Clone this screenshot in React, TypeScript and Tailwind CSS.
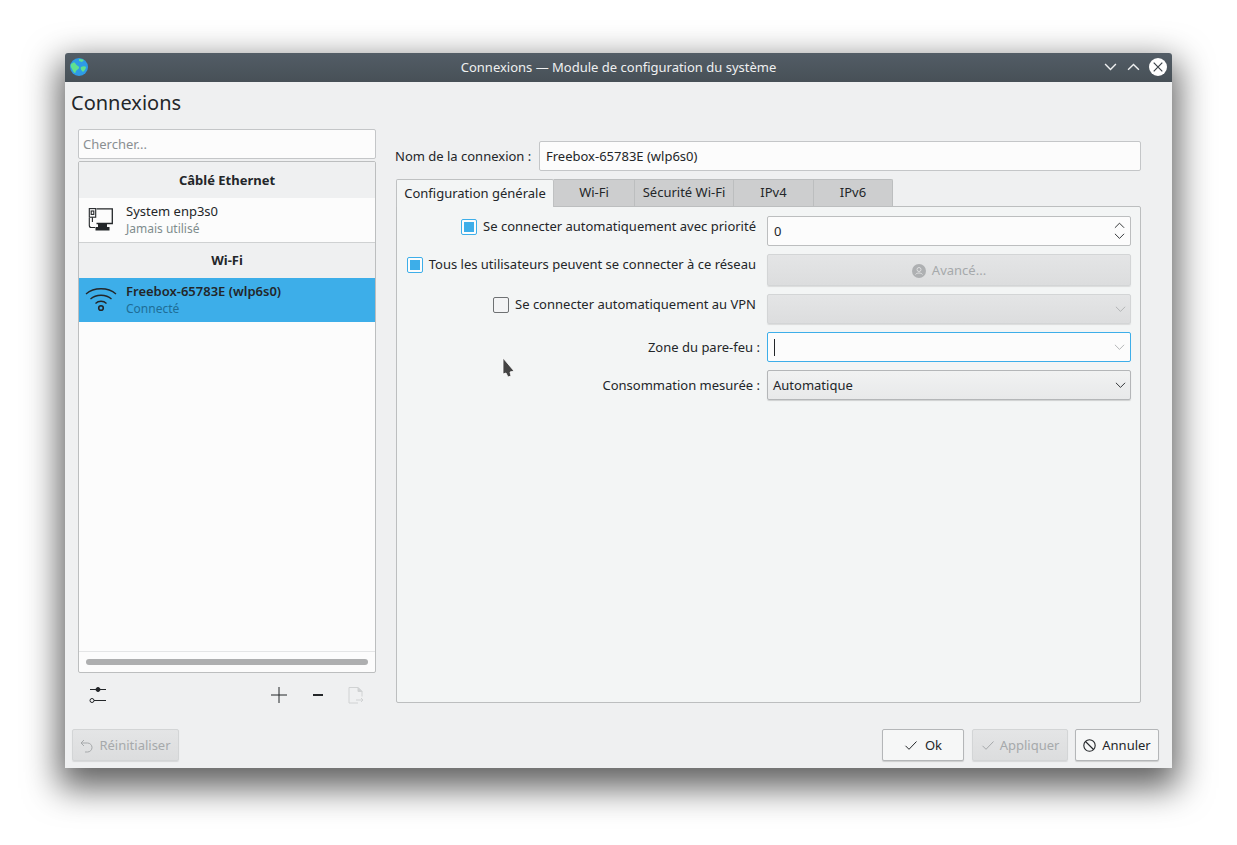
import React from "react";

const ink = "#232629";

function Chevron({ up = false, color = ink, size = 12, weight = 1 }: { up?: boolean; color?: string; size?: number; weight?: number }) {
  return (
    <svg width={size} height={size * 0.6} viewBox="0 0 12 7" fill="none" stroke={color} strokeWidth={weight}>
      <path d={up ? "M1 6.2 6 1.2l5 5" : "M1 .8l5 5 5-5"} />
    </svg>
  );
}

function Globe() {
  return (
    <svg width="18" height="18" viewBox="0 0 18 18">
      <circle cx="9" cy="9" r="9" fill="#2e9be6" />
      <path d="M1 6c2-1 3-2 4-1s1 2 3 3 1 3-1 4-1 3-2 3-2-2-3-4-2-3-1-5z" fill="#5fe08f" />
      <path d="M9 1c2 0 3 0 5 1l-2 2-3-1zM11 9c2-1 4-1 5 0 0 2-2 4-3 5-1-1-3-3-2-5z" fill="#5fe08f" />
    </svg>
  );
}

function EthernetIcon() {
  return (
    <svg width="25" height="24" viewBox="0 0 25 24" fill="none" stroke={ink} strokeWidth="1.1">
      <path d="M8.500 .8H24.300V15.500H8.500" strokeWidth="1.300" />
      <rect x="1.300" y=".6" width="6.400" height="8.600" />
      <rect x="3.200" y="3" width="2.600" height="3.400" />
      <path d="M4.400 9.200V14M1.300 10v7.500q0 2 2 2H7" />
      <rect x="10" y="16" width="9" height="3" fill={ink} stroke="none" />
      <rect x="7.500" y="19" width="14" height="3.500" fill={ink} stroke="none" />
    </svg>
  );
}

function WifiIcon() {
  return (
    <svg width="32" height="26" viewBox="0 0 32 26" fill="none" stroke={ink} strokeWidth="1.300">
      <path d="M1 7c8-7 22-7 30 0" />
      <path d="M5.500 12c5.500-5 15.500-5 21 0" />
      <path d="M10.500 16.500c3-3 8-3 11 0" />
      <circle cx="16" cy="21" r="2.300" strokeWidth="1.600" />
    </svg>
  );
}

function Check({ color = ink }: { color?: string }) {
  return (
    <svg width="14" height="11" viewBox="0 0 14 11" fill="none" stroke={color} strokeWidth="1">
      <path d="M1.500 5.800 5 9.300 12.500 1.500" />
    </svg>
  );
}

function CheckBox({ on = false }: { on?: boolean }) {
  return on ? (
    <span className="flex h-[16px] w-[16px] shrink-0 items-center justify-center rounded-[2px] border border-[#3daee9] bg-[#fcfcfc]">
      <span className="h-[10px] w-[10px] bg-[#3daee9]" />
    </span>
  ) : (
    <span className="h-[16px] w-[16px] shrink-0 rounded-[2px] border border-[#6e7173] bg-[#f3f4f5]" />
  );
}

const rowButton =
  "rounded-[2px] border border-[#b4b6b8] bg-gradient-to-b from-[#f1f2f2] to-[#e8e9ea] shadow-[0_1px_1px_rgba(0,0,0,0.15)]";
const disabledButton =
  "rounded-[2px] border border-[#d3d5d6] bg-gradient-to-b from-[#e4e5e6] to-[#dcddde] shadow-[0_1px_1px_rgba(0,0,0,0.1)]";

export default function App() {
  const tabs = [
    ["Wi-Fi", "w-[81px]"],
    ["Sécurité Wi-Fi", "w-[99px]"],
    ["IPv4", "w-[80px]"],
    ["IPv6", "w-[79px]"],
  ];
  return (
    <div
      className="relative h-[845px] w-[1237px] overflow-hidden bg-white pl-[65px] pt-[53px] text-[13px] text-[#232629]"
      style={{ fontFamily: '"Noto Sans", sans-serif' }}
    >
      <div className="flex h-[715px] w-[1107px] flex-col rounded-t-[3px] bg-[#eff0f1] shadow-[0_14px_34px_6px_rgba(0,0,0,0.62)]">
        {/* Title bar */}
        <div className="relative flex h-[29px] shrink-0 items-center justify-center rounded-t-[3px] bg-gradient-to-b from-[#535d66] to-[#475057] text-[#eff0f1]">
          <span className="absolute left-[5px] top-[5px]"><Globe /></span>
          <span>Connexions — Module de configuration du système</span>
          <div className="absolute right-[5px] top-[5px] flex h-[18px] items-center">
            <span className="mr-[10px]"><Chevron color="#eff0f1" size={13} weight={1.300} /></span>
            <span className="mr-[9px]"><Chevron up color="#eff0f1" size={13} weight={1.300} /></span>
            <span className="flex h-[18px] w-[18px] items-center justify-center rounded-full bg-white">
              <svg width="10" height="10" viewBox="0 0 10 10" stroke="#3b4248" strokeWidth="1.200">
                <path d="M.7.7l8.600 8.600M9.300.7.7 9.300" />
              </svg>
            </span>
          </div>
        </div>

        {/* Body */}
        <div className="flex min-h-0 flex-1 flex-col px-[6px]">
          <h1 className="mt-[7px] h-[27px] text-[20px] font-normal leading-[27px]">Connexions</h1>

          <div className="mt-[13px] flex h-[574px] pl-[7px]">
            {/* Left column */}
            <div className="flex w-[298px] shrink-0 flex-col">
              <div className="flex h-[30px] shrink-0 items-center rounded-[2px] border border-[#c4c6c8] bg-[#fcfcfc] pl-[4px] pt-[2px] text-[#8a8f92]">
                Chercher...
              </div>
              <div className="mt-[2px] flex h-[512px] shrink-0 flex-col overflow-hidden rounded-[2px] border border-[#bcbebf] bg-[#fcfcfc]">
                <div className="flex h-[36px] shrink-0 items-center justify-center bg-[#eff0f1] pt-[1px] font-bold">
                  Câblé Ethernet
                </div>
                <div className="flex h-[45px] shrink-0 items-center border-b border-[#cfd1d2]">
                  <span className="ml-[9px] flex w-[38px]"><EthernetIcon /></span>
                  <div className="leading-[17px]">
                    <div>System enp3s0</div>
                    <div className="text-[12px] text-[#7f8c8d]">Jamais utilisé</div>
                  </div>
                </div>
                <div className="flex h-[35px] shrink-0 items-center justify-center bg-[#eff0f1] font-bold">Wi-Fi</div>
                <div className="flex h-[44px] shrink-0 items-center bg-[#3daee9]">
                  <span className="ml-[6px] flex w-[41px]"><WifiIcon /></span>
                  <div className="leading-[17px]">
                    <div className="font-semibold">Freebox-65783E (wlp6s0)</div>
                    <div className="text-[12px] text-[#1f6d96]">Connecté</div>
                  </div>
                </div>
                <div className="flex-1" />
                <div className="flex h-[21px] shrink-0 items-center border-t border-[#e4e5e6] px-[7px]">
                  <div className="h-[6px] w-full rounded-full bg-[#aeafb0]" />
                </div>
              </div>
              {/* Toolbar */}
              <div className="flex h-[30px] shrink-0 items-center pl-[11px] pt-[14px]">
                <svg width="17" height="17" viewBox="0 0 17 17" fill="none" stroke={ink} strokeWidth="1">
                  <path d="M1 2.500h16M5 13.500h12" />
                  <circle cx="9" cy="2.500" r="2" fill={ink} />
                  <circle cx="3" cy="13.500" r="2" />
                </svg>
                <svg className="ml-[165px]" width="16" height="16" viewBox="0 0 16 16" stroke={ink} strokeWidth="1">
                  <path d="M0 8h16M8 0v16" />
                </svg>
                <svg className="ml-[26px]" width="10" height="4" viewBox="0 0 10 4" fill={ink}>
                  <rect y="1" width="10" height="2" />
                </svg>
                <svg className="ml-[25px]" width="16" height="17" viewBox="0 0 16 17" fill="none" stroke="#d0d2d3" strokeWidth="1">
                  <path d="M1 .5h9l4 4v5M1 .5v15.500h9" />
                  <path d="M10 .5l4 4h-4z" fill="#d0d2d3" />
                  <path d="M8 13h7m-2-2 2 2-2 2" />
                </svg>
              </div>
            </div>

            {/* Right column */}
            <div className="ml-[20px] flex w-[745px] shrink-0 flex-col pt-[12px]">
              <div className="flex h-[30px] shrink-0 items-center">
                <span className="ml-[-1px] w-[144px] pt-[2px]">Nom de la connexion :</span>
                <div className="flex h-[30px] w-[602px] items-center rounded-[2px] border border-[#c4c6c8] bg-[#fcfcfc] pl-[6px] pt-[2px]">
                  Freebox-65783E (wlp6s0)
                </div>
              </div>

              <div className="mt-[8px] flex h-[28px] shrink-0">
                <div className="z-10 flex h-[28px] w-[158px] items-center justify-center rounded-t-[2px] border border-b-0 border-[#bfc1c2] bg-[#f3f5f5]">
                  Configuration générale
                </div>
                {tabs.map(([t, w], i) => (
                  <div
                    key={t}
                    className={`flex h-[27px] items-center justify-center border-t border-r border-[#bcbebf] bg-[#cdcecf] ${w} ${i === 3 ? "rounded-tr-[2px]" : ""}`}
                  >
                    {t}
                  </div>
                ))}
              </div>

              <div className="-mt-px h-[497px] rounded-b-[2px] rounded-tr-[2px] border border-[#bcbebf] bg-[#f3f5f5] pl-[10px] pr-[9px] pt-[9px]">
                <div className="grid grid-cols-[360px_364px] grid-rows-[30px_32px_30px_30px_30px] gap-y-[8px] whitespace-nowrap">
                  <div className="flex items-center justify-end gap-[6px] pb-[9px] pr-[11px]">
                    <CheckBox on />
                    <span>Se connecter automatiquement avec priorité</span>
                  </div>
                  <div className="flex items-center justify-between rounded-[2px] border border-[#bcbebf] bg-[#fcfcfc] pl-[6px] pr-[5px]">
                    <span className="pt-[1px]">0</span>
                    <span className="flex flex-col gap-[4px]">
                      <Chevron up size={11} />
                      <Chevron size={11} />
                    </span>
                  </div>

                  <div className="flex items-center justify-end gap-[6px] pb-[11px] pr-[11px]">
                    <CheckBox on />
                    <span>Tous les utilisateurs peuvent se connecter à ce réseau</span>
                  </div>
                  <div className={`flex items-center justify-center gap-[6px] pt-[1px] text-[#a6a9ab] ${disabledButton}`}>
                    <svg width="14" height="14" viewBox="0 0 14 14">
                      <circle cx="7" cy="7" r="7" fill="#aeb0b2" />
                      <circle cx="7" cy="5.500" r="2" fill="none" stroke="#dedfe0" strokeWidth="1" />
                      <path d="M3.500 10.500c1-2 6-2 7 0" fill="none" stroke="#dedfe0" strokeWidth="1" />
                    </svg>
                    <span>Avancé...</span>
                  </div>

                  <div className="flex items-center justify-end gap-[6px] pb-[9px] pr-[11px]">
                    <CheckBox />
                    <span>Se connecter automatiquement au VPN</span>
                  </div>
                  <div className={`flex items-center justify-end pr-[4px] ${disabledButton}`}>
                    <Chevron color="#aeb0b2" size={11} />
                  </div>

                  <div className="flex items-center justify-end pr-[7px] pt-[2px]">Zone du pare-feu :</div>
                  <div className="flex items-center justify-between rounded-[2px] border border-[#3daee9] bg-[#fcfcfc] pl-[6px] pr-[5px]">
                    <span className="h-[17px] w-px bg-[#232629]" />
                    <Chevron color="#aeb0b2" size={11} />
                  </div>

                  <div className="flex items-center justify-end pr-[7px] pt-[2px]">Consommation mesurée :</div>
                  <div className={`flex items-center justify-between pl-[5px] pr-[4px] pt-[1px] ${rowButton}`}>
                    <span>Automatique</span>
                    <Chevron size={11} />
                  </div>
                </div>
              </div>
            </div>
          </div>

          {/* Bottom buttons */}
          <div className="mt-[26px] flex h-[32px] items-stretch pl-[1px] pr-[7px]">
            <div className={`flex w-[107px] items-center justify-center gap-[6px] pt-[1px] text-[#a6a9ab] ${disabledButton}`}>
              <svg width="13" height="14" viewBox="0 0 13 14" fill="none" stroke="#a6a9ab" strokeWidth="1">
                <path d="M4 1 1 4l3 3M1 4h6.500a4.500 4.500 0 0 1 0 9H5" />
              </svg>
              Réinitialiser
            </div>
            <div className="flex-1" />
            <div className={`flex w-[82px] items-center justify-center gap-[7px] pt-[1px] !bg-none !bg-[#f6f7f7] ${rowButton}`}>
              <Check /> Ok
            </div>
            <div className={`ml-[8px] flex w-[96px] items-center justify-center gap-[5px] pt-[1px] text-[#a6a9ab] ${disabledButton}`}>
              <Check color="#a6a9ab" /> Appliquer
            </div>
            <div className={`ml-[7px] flex w-[84px] items-center justify-center gap-[6px] pt-[1px] !bg-none !bg-[#f6f7f7] ${rowButton}`}>
              <svg width="13" height="13" viewBox="0 0 13 13" fill="none" stroke={ink} strokeWidth="1.100">
                <circle cx="6.500" cy="6.500" r="5.700" />
                <path d="M2.500 2.500l8 8" />
              </svg>
              Annuler
            </div>
          </div>
        </div>
      </div>

      {/* Mouse pointer over the page */}
      <svg className="absolute left-[502px] top-[357px]" width="14" height="22" viewBox="0 0 14 22">
        <path d="M1 1v16l3-1 2 4 3-1-1-4 4-1z" fill="#444" stroke="#fff" strokeWidth="0.800" />
      </svg>
    </div>
  );
}
